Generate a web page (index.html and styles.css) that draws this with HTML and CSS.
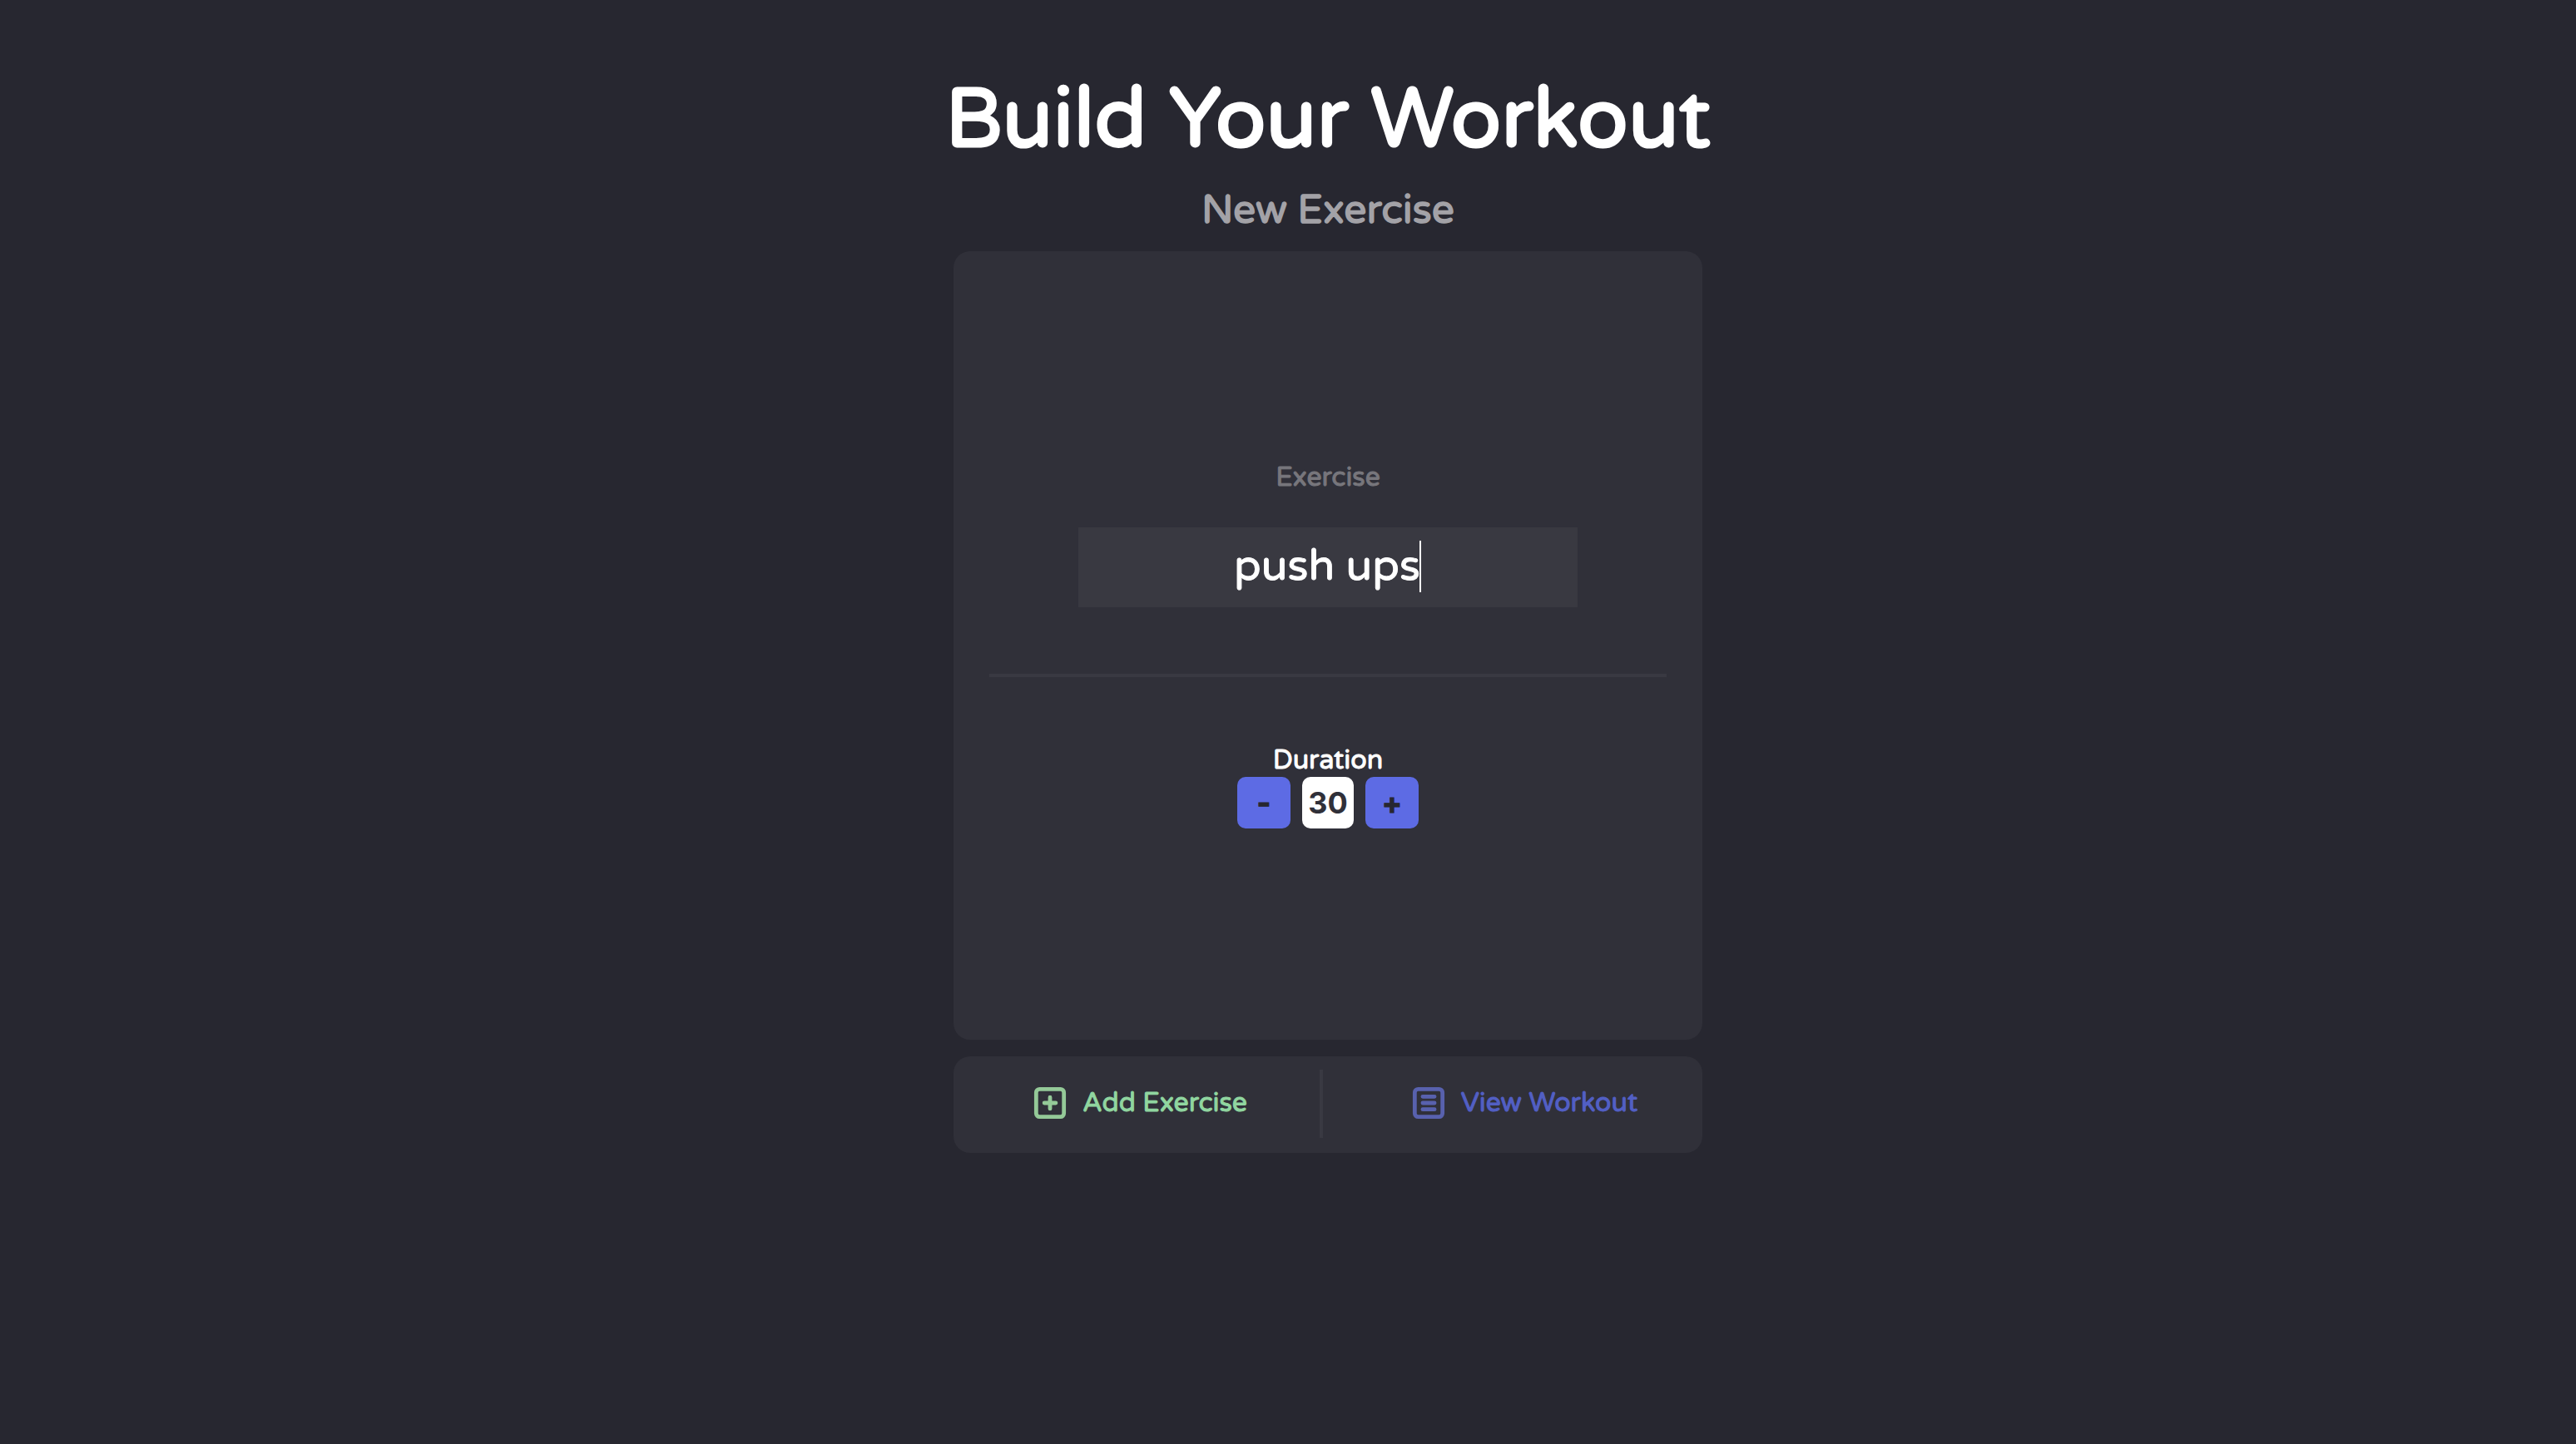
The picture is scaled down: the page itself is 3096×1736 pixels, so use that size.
FILE: index.html
```
<!DOCTYPE html>
<html lang="en">
<head>
<meta charset="utf-8">
<meta name="viewport" content="width=device-width, initial-scale=1">
<title>Build Your Workout</title>
<link rel="stylesheet" href="styles.css">
</head>
<body>
<main class="page">
  <h1 class="title">Build Your Workout</h1>
  <h2 class="subtitle">New Exercise</h2>
  <form class="builder">
    <section class="card">
      <label class="label label-muted" for="exercise">Exercise</label>
      <div class="field">
        <input class="input" id="exercise" type="text" value="push ups" autocomplete="off" spellcheck="false">
        <span class="caret"></span>
      </div>
      <hr class="rule">
      <label class="label" for="duration">Duration</label>
      <div class="stepper">
        <button class="step" type="button">-</button>
        <output class="value" id="duration">30</output>
        <button class="step" type="button">+</button>
      </div>
    </section>
    <div class="actions">
      <button class="action action-add" type="button">
        <svg class="icon" viewBox="0 0 24 24" aria-hidden="true">
          <rect x="4" y="4" width="16" height="16" rx="2"/>
          <path d="M12 8.7v6.6M8.7 12h6.6"/>
        </svg>
        Add Exercise
      </button>
      <button class="action action-view" type="button">
        <svg class="icon" viewBox="0 0 24 24" aria-hidden="true">
          <rect x="4" y="4" width="16" height="16" rx="2"/>
          <path d="M8.6 8.3h6.8M8.6 12h6.8M8.6 15.7h6.8"/>
        </svg>
        View Workout
      </button>
    </div>
  </form>
</main>
</body>
</html>
```
FILE: styles.css
```
* {
  box-sizing: border-box;
}

body {
  margin: 0;
  min-height: 100vh;
  background: #272730;
  color: #fff;
  font-family: "Varela Round", "Noto Sans", sans-serif;
  font-size: 32px;
  line-height: 40px;
}

.page {
  display: flex;
  flex-direction: column;
  align-items: center;
  padding: 85px 0 80px 96px;
}

.title {
  margin: 0 0 16px;
  font-size: 100px;
  font-weight: 700;
  line-height: 120px;
  text-align: center;
}

.subtitle {
  margin: 0 0 17px;
  color: #a3a2a7;
  font-size: 48px;
  font-weight: 700;
  line-height: 64px;
}

.builder {
  display: flex;
  flex-direction: column;
  gap: 20px;
  width: 100%;
  max-width: 900px;
  -webkit-text-stroke: 1px currentColor;
}

.card {
  display: flex;
  flex-direction: column;
  align-items: center;
  justify-content: center;
  min-height: 948px;
  padding: 42px 43px 44px;
  border-radius: 20px;
  background: #303039;
}

.label-muted {
  color: #77767c;
}

.field {
  position: relative;
  width: 100%;
  max-width: 600px;
  margin: 40px 0 80px;
}

.input {
  display: block;
  width: 100%;
  height: 96px;
  padding: 0 2px 4px 0;
  border: 0;
  outline: 0;
  background: #393941;
  color: #fff;
  font: inherit;
  font-size: 52px;
  text-align: center;
}

.caret {
  position: absolute;
  top: 16px;
  left: calc(50% + 110px);
  width: 2px;
  height: 62px;
  background: #fff;
}

.rule {
  width: 100%;
  height: 4px;
  margin: 0 0 80px;
  border: 0;
  background: #393942;
}

.stepper {
  display: flex;
  gap: 14px;
}

.step,
.value {
  display: flex;
  align-items: center;
  justify-content: center;
  width: 64px;
  height: 62px;
  padding: 0;
  border: 0;
  border-radius: 10px;
  background: #5d6be4;
  color: #272730;
  font: 700 36px/40px Inter, sans-serif;
}

.value {
  width: 62px;
  background: #fff;
  color: #303039;
  -webkit-text-stroke: 0;
}

.actions {
  display: grid;
  grid-template-columns: 444px 1fr;
  padding: 16px 0 18px;
  border-radius: 20px;
  background: #303039;
}

.action {
  display: flex;
  align-items: center;
  justify-content: center;
  gap: 14px;
  height: 82px;
  padding: 0 0 2px;
  border: 0;
  background: none;
  font: inherit;
}

.action-add {
  padding-left: 4px;
  border-right: 4px solid #393942;
  color: #90d6a0;
}

.action-view {
  padding-left: 24px;
  color: #525fc4;
}

.icon {
  width: 50px;
  height: 50px;
  fill: none;
  stroke: currentColor;
  stroke-width: 2.3;
  stroke-linecap: round;
}

.action-add .icon {
  color: #94c998;
}

.action-view .icon {
  color: #5861ae;
}
```
